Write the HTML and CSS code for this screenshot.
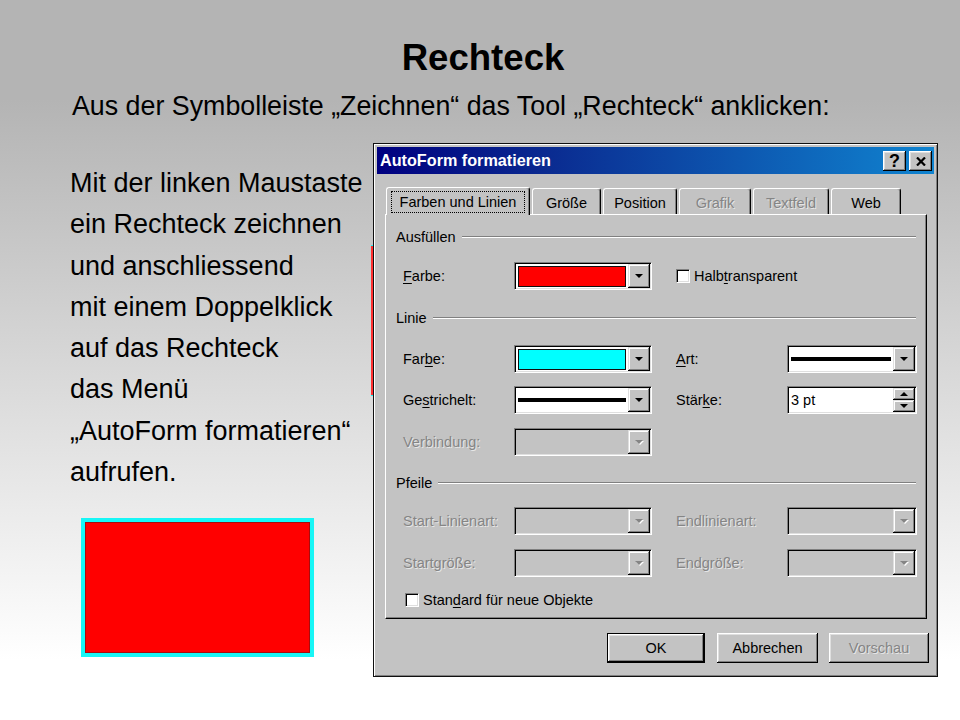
FILE: index.html
```html
<!DOCTYPE html>
<html lang="de">
<head>
<meta charset="utf-8">
<title>Rechteck</title>
<link rel="stylesheet" href="styles.css">
</head>
<body>
<div class="slide">
  <h1 class="title">Rechteck</h1>
  <p class="intro">Aus der Symbolleiste „Zeichnen“ das Tool „Rechteck“ anklicken:</p>
  <p class="steps">Mit der linken Maustaste<br>ein Rechteck zeichnen<br>und anschliessend<br>mit einem Doppelklick<br>auf das Rechteck<br>das Menü<br>„AutoForm formatieren“<br>aufrufen.</p>
  <div class="red-rect"></div>
  <div class="behind-rect"></div>

  <div class="dialog">
    <div class="titlebar">
      <span class="caption">AutoForm formatieren</span>
      <div class="tbtns">
        <span class="tbtn help">?</span>
        <span class="tbtn close"><svg width="10" height="9" viewBox="0 0 10 9"><path d="M1 0.5L9 8.5M9 0.5L1 8.5" stroke="#000" stroke-width="2.2" fill="none"/></svg></span>
      </div>
    </div>

    <div class="tabs">
      <div class="tab active t-farben"><span class="focus">Farben und Linien</span></div>
      <div class="tab t-groesse">Größe</div>
      <div class="tab t-position">Position</div>
      <div class="tab t-grafik off">Grafik</div>
      <div class="tab t-textfeld off">Textfeld</div>
      <div class="tab t-web">Web</div>
    </div>

    <div class="panel">
      <div class="group first"><span>Ausfüllen</span><span class="line"></span></div>
      <div class="row after-group">
        <span class="lbl"><u>F</u>arbe:</span>
        <div class="combo"><span class="swatch red"></span><span class="drop"><i class="tri"></i></span></div>
        <div class="check"><span class="cb"></span><span>Halb<u>t</u>ransparent</span></div>
      </div>

      <div class="group"><span>Linie</span><span class="line"></span></div>
      <div class="row r-color">
        <span class="lbl">Far<u>b</u>e:</span>
        <div class="combo"><span class="swatch cyan"></span><span class="drop"><i class="tri"></i></span></div>
        <span class="lbl"><u>A</u>rt:</span>
        <div class="combo wide"><span class="lineval art"></span><span class="drop"><i class="tri"></i></span></div>
      </div>
      <div class="row r-dash">
        <span class="lbl">Ge<u>s</u>trichelt:</span>
        <div class="combo"><span class="lineval"></span><span class="drop"><i class="tri"></i></span></div>
        <span class="lbl">Stär<u>k</u>e:</span>
        <div class="combo wide spin"><span class="spin-val">3 pt</span><span class="spin-btns"><span class="sb"><i class="tri up"></i></span><span class="sb"><i class="tri"></i></span></span></div>
      </div>
      <div class="row">
        <span class="lbl off">Verbindung:</span>
        <div class="combo disabled"><span class="empty"></span><span class="drop"><i class="tri off"></i></span></div>
      </div>

      <div class="group g-arrows"><span>Pfeile</span><span class="line"></span></div>
      <div class="row">
        <span class="lbl off">Start-Linienart:</span>
        <div class="combo disabled"><span class="empty"></span><span class="drop"><i class="tri off"></i></span></div>
        <span class="lbl off">Endlinienart:</span>
        <div class="combo wide disabled"><span class="empty"></span><span class="drop"><i class="tri off"></i></span></div>
      </div>
      <div class="row">
        <span class="lbl off">Startgröße:</span>
        <div class="combo disabled"><span class="empty"></span><span class="drop"><i class="tri off"></i></span></div>
        <span class="lbl off">Endgröße:</span>
        <div class="combo wide disabled"><span class="empty"></span><span class="drop"><i class="tri off"></i></span></div>
      </div>
      <div class="check bottom-check"><span class="cb"></span><span>Stan<u>d</u>ard für neue Objekte</span></div>
    </div>

    <div class="buttons">
      <span class="btn default b-ok">OK</span>
      <span class="btn b-cancel">Abbrechen</span>
      <span class="btn b-preview off">Vorschau</span>
    </div>
  </div>
</div>
</body>
</html>
```
FILE: styles.css
```css
* { box-sizing: border-box; }
html, body { margin: 0; padding: 0; }
body {
  width: 960px;
  height: 720px;
  overflow: hidden;
  font-family: "Liberation Sans", Arial, sans-serif;
}
.slide {
  position: relative;
  width: 960px;
  height: 720px;
  padding-top: 38px;
  background: linear-gradient(to bottom, #b4b4b4 0, #b4b4b4 100px, #ffffff 660px);
  color: #000;
}
.title {
  margin: 0 0 0 6px;
  text-align: center;
  font-size: 36.6px;
  line-height: 40px;
  font-weight: bold;
}
.intro {
  margin: 8px 0 0 72px;
  font-size: 26.8px;
  line-height: 41px;
}
.steps {
  margin: 36px 0 0 70px;
  font-size: 27px;
  line-height: 41.3px;
}
.red-rect {
  margin: 25px 0 0 81px;
  width: 233px;
  height: 139px;
  background: #ff0000;
  border: 4px solid #18f6f6;
  box-shadow: inset 0 0 0 1px rgba(110, 20, 20, 0.6);
}
.behind-rect {
  position: absolute;
  left: 371px;
  top: 245px;
  width: 30px;
  height: 151px;
  background: #ff3030;
  border: 1px solid #18f6f6;
  border-left: 0;
}

/* dialog */
.dialog {
  position: absolute;
  left: 373px;
  top: 143px;
  width: 565px;
  height: 534px;
  padding: 3px;
  background: #c3c3c3;
  border: 1px solid #101010;
  box-shadow: inset 1px 1px 0 #ffffff, inset -1px -1px 0 #808080;
  display: flex;
  flex-direction: column;
  font-size: 14.5px;
  color: #000;
}
.titlebar {
  height: 27px;
  flex: none;
  display: flex;
  align-items: center;
  justify-content: space-between;
  padding: 0 2px 0 3px;
  background: linear-gradient(to right, #000080 0%, #0a2a90 30%, #1084d0 100%);
  color: #fff;
  font-weight: bold;
  font-size: 16.2px;
}
.tbtns {
  display: flex;
  gap: 3px;
  align-self: flex-start;
  margin-top: 4px;
}
.tbtn {
  width: 23px;
  height: 20px;
  background: #c3c3c3;
  box-shadow: inset -1px -1px #000, inset 1px 1px #fff, inset -2px -2px #808080, inset 2px 2px #dfdfdf;
  display: flex;
  align-items: center;
  justify-content: center;
  color: #000;
  font-size: 18px;
  font-weight: bold;
  line-height: 1;
}

/* tabs */
.tabs {
  position: relative;
  z-index: 1;
  display: flex;
  align-items: flex-end;
  gap: 2px;
  height: 27px;
  flex: none;
  margin: 13px 0 0 9px;
}
.tab {
  height: 26px;
  background: #c3c3c3;
  border-top: 1px solid #fff;
  border-left: 1px solid #fff;
  border-right: 1px solid #000;
  border-radius: 3px 3px 0 0;
  box-shadow: inset -1px 0 #808080;
  display: flex;
  align-items: center;
  justify-content: center;
  padding-top: 2px;
}
.tab.active {
  height: 28px;
  margin-bottom: -1px;
  padding-top: 0;
}
.tab.off { color: #858585; text-shadow: 1px 1px 0 rgba(255,255,255,0.6); }
.t-farben { width: 144px; }
.t-groesse { width: 69px; }
.t-position { width: 74px; }
.t-grafik { width: 72px; }
.t-textfeld { width: 76px; }
.t-web { width: 70px; }
.focus {
  width: 134px;
  height: 22px;
  border: 1px dotted #000;
  display: flex;
  align-items: center;
  justify-content: center;
}

/* panel */
.panel {
  flex: none;
  width: 542px;
  height: 405px;
  margin-left: 8px;
  padding: 12px 10px 0 10px;
  border-top: 1px solid #fff;
  border-left: 1px solid #fff;
  border-right: 1px solid #000;
  border-bottom: 1px solid #000;
  box-shadow: inset -1px -1px #808080;
  display: flex;
  flex-direction: column;
}
.group {
  height: 20px;
  display: flex;
  align-items: center;
  gap: 6px;
  margin-top: 18px;
}
.group.first { margin-top: 0; }
.group.g-arrows { margin-top: 17px; }
.group .line {
  flex: 1;
  height: 2px;
  border-top: 1px solid #808080;
  border-bottom: 1px solid #fff;
}
.row {
  display: grid;
  grid-template-columns: 111px 162px 111px 130px;
  align-items: center;
  height: 28px;
  padding-left: 7px;
  margin-top: 14px;
}
.row.after-group { margin-top: 15px; }
.row.r-color { margin-top: 17px; }
.row.r-dash { margin-top: 13px; }
.lbl { white-space: nowrap; }
.off { color: #858585; text-shadow: 1px 1px 0 rgba(255,255,255,0.6); }
u { text-decoration-thickness: 1px; text-underline-offset: 2px; }

.combo {
  width: 138px;
  height: 28px;
  display: flex;
  align-items: center;
  padding: 1px;
  border: 1px solid;
  border-color: #808080 #fff #fff #808080;
  box-shadow: inset 1px 1px #000, inset -1px -1px #dfdfdf;
  background: #fff;
}
.combo.wide { width: 130px; }
.combo.disabled { background: #c3c3c3; }
.swatch {
  flex: 1;
  height: 21px;
  margin: 0 2px;
  border: 1px solid #101010;
}
.swatch.red { background: #ff0000; }
.swatch.cyan { background: #00ffff; }
.lineval {
  flex: 1;
  height: 4px;
  margin: 0 2px;
  background: #000;
}
.empty { flex: 1; }
.drop {
  width: 22px;
  height: 24px;
  flex: none;
  background: #c3c3c3;
  box-shadow: inset -1px -1px #000, inset 1px 1px #dfdfdf, inset -2px -2px #808080, inset 2px 2px #fff;
  display: flex;
  align-items: center;
  justify-content: center;
}
.tri {
  width: 0;
  height: 0;
  border-left: 4px solid transparent;
  border-right: 4px solid transparent;
  border-top: 4px solid #000;
}
.tri.up {
  border-top: 0;
  border-bottom: 4px solid #000;
}
.tri.off {
  border-top-color: #858585;
  filter: drop-shadow(1px 1px 0 #fff);
}
.spin-val { flex: 1; padding-left: 2px; }
.spin-btns {
  width: 22px;
  height: 24px;
  display: flex;
  flex-direction: column;
}
.sb {
  height: 12px;
  background: #c3c3c3;
  box-shadow: inset -1px -1px #000, inset 1px 1px #dfdfdf, inset -2px -2px #808080, inset 2px 2px #fff;
  display: flex;
  align-items: center;
  justify-content: center;
}

.check {
  display: flex;
  align-items: center;
  gap: 4px;
  grid-column: 3 / 5;
  white-space: nowrap;
}
.cb {
  width: 14px;
  height: 14px;
  flex: none;
  background: #fff;
  border: 1px solid;
  border-color: #808080 #fff #fff #808080;
  box-shadow: inset 1px 1px #000, inset -1px -1px #dfdfdf;
}
.bottom-check {
  margin: 15px 0 0 9px;
  height: 16px;
}

/* buttons */
.buttons {
  display: flex;
  justify-content: flex-end;
  margin-top: 14px;
  padding-right: 5px;
}
.btn {
  height: 30px;
  background: #c3c3c3;
  box-shadow: inset -1px -1px #000, inset 1px 1px #fff, inset -2px -2px #808080, inset 2px 2px #dfdfdf;
  display: flex;
  align-items: center;
  justify-content: center;
}
.btn.default {
  border: 1px solid #000;
}
.b-ok { width: 98px; }
.b-cancel { width: 101px; margin-left: 12px; }
.b-preview { width: 100px; margin-left: 11px; }
```
